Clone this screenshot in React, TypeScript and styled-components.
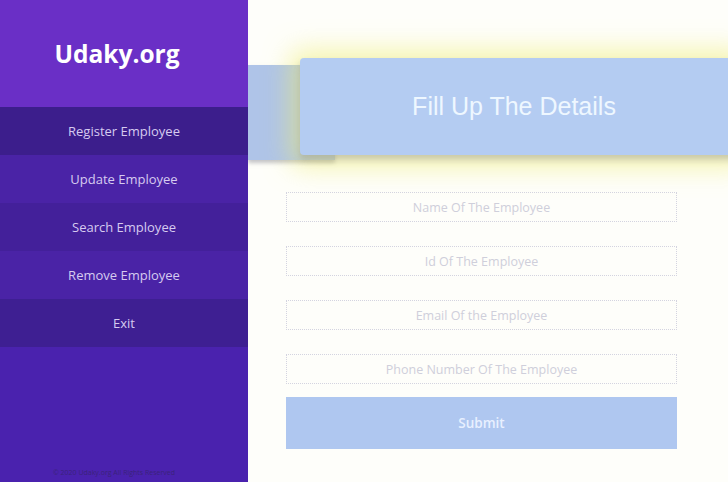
import * as React from "react";
import styled, { createGlobalStyle } from "styled-components";

const GlobalStyle = createGlobalStyle`
  html, body, #root {
    margin: 0;
    padding: 0;
    height: 100%;
  }
  body {
    font-family: "Open Sans", "Noto Sans", sans-serif;
    overflow: hidden;
  }
`;

const Page = styled.div`
  display: flex;
  width: 728px;
  height: 482px;
  overflow: hidden;
`;

const Sidebar = styled.aside`
  width: 248px;
  flex-shrink: 0;
  display: flex;
  flex-direction: column;
  background-color: #4a22ae;
`;

const Brand = styled.div`
  height: 107px;
  display: flex;
  align-items: center;
  justify-content: center;
  padding-right: 14px;
  box-sizing: border-box;
  background-color: #6a2fc6;
  color: #ffffff;
  font-family: "Open Sans", sans-serif;
  font-weight: 700;
  font-size: 24.5px;
`;

const NavItem = styled.div<{ $shade: string }>`
  height: 48px;
  display: flex;
  align-items: center;
  justify-content: center;
  background-color: ${(p) => p.$shade};
  color: #d6cbf0;
  font-size: 13px;
`;

const Footer = styled.div`
  margin-top: auto;
  padding-bottom: 5px;
  padding-right: 20px;
  text-align: center;
  font-size: 7px;
  color: #3a237a;
`;

const Main = styled.main`
  flex: 1;
  display: flex;
  flex-direction: column;
  background-color: #fefefa;
  overflow: hidden;
`;

const HeaderArea = styled.div`
  display: flex;
  padding-top: 58px;
  height: 102px;
`;

const Backdrop = styled.div`
  width: 87px;
  height: 95px;
  margin-top: 7px;
  flex-shrink: 0;
  background-color: #afc4e8;
  box-shadow: 0 3px 4px rgba(140, 140, 150, 0.5);
`;

const Card = styled.div`
  margin-left: -35px;
  width: 440px;
  height: 97px;
  flex-shrink: 0;
  position: relative;
  border-radius: 4px;
  background-color: #b4ccf2;
  display: flex;
  align-items: center;
  justify-content: center;
  padding-right: 12px;
  box-sizing: border-box;
  color: #eef7ff;
  font-family: "Liberation Sans", Arial, sans-serif;
  font-size: 25px;
  box-shadow: 0 5px 6px rgba(150, 150, 150, 0.45),
    0 2px 26px 10px rgba(238, 236, 110, 0.55);
`;

const Form = styled.form`
  display: flex;
  flex-direction: column;
  gap: 24px;
  margin: 32px 0 0 38px;
  width: 391px;
`;

const Field = styled.input`
  height: 30px;
  box-sizing: border-box;
  border: 1px dotted #d4d4e0;
  background: transparent;
  text-align: center;
  font-family: "Open Sans", sans-serif;
  font-size: 12.5px;
  color: #cfcfdb;
  outline: none;
  &::placeholder {
    color: #cfcfdb;
  }
`;

const Submit = styled.button`
  height: 52px;
  margin-top: -11px;
  border: none;
  background-color: #afc7f0;
  color: #e8f0ff;
  font-family: "Open Sans", sans-serif;
  font-size: 13.5px;
  font-weight: 600;
`;

const navItems = [
  { label: "Register Employee", shade: "#3c1e8c" },
  { label: "Update Employee", shade: "#4a23a6" },
  { label: "Search Employee", shade: "#43209a" },
  { label: "Remove Employee", shade: "#4a23a6" },
  { label: "Exit", shade: "#3e1f92" },
];

const fields = [
  "Name Of The Employee",
  "Id Of The Employee",
  "Email Of the Employee",
  "Phone Number Of The Employee",
];

export default function App() {
  return (
    <Page>
      <GlobalStyle />
      <Sidebar>
        <Brand>Udaky.org</Brand>
        {navItems.map((item) => (
          <NavItem key={item.label} $shade={item.shade}>
            {item.label}
          </NavItem>
        ))}
        <Footer>© 2020 Udaky.org All Rights Reserved</Footer>
      </Sidebar>
      <Main>
        <HeaderArea>
          <Backdrop />
          <Card>Fill Up The Details</Card>
        </HeaderArea>
        <Form onSubmit={(e) => e.preventDefault()}>
          {fields.map((f) => (
            <Field key={f} placeholder={f} />
          ))}
          <Submit type="submit">Submit</Submit>
        </Form>
      </Main>
    </Page>
  );
}
